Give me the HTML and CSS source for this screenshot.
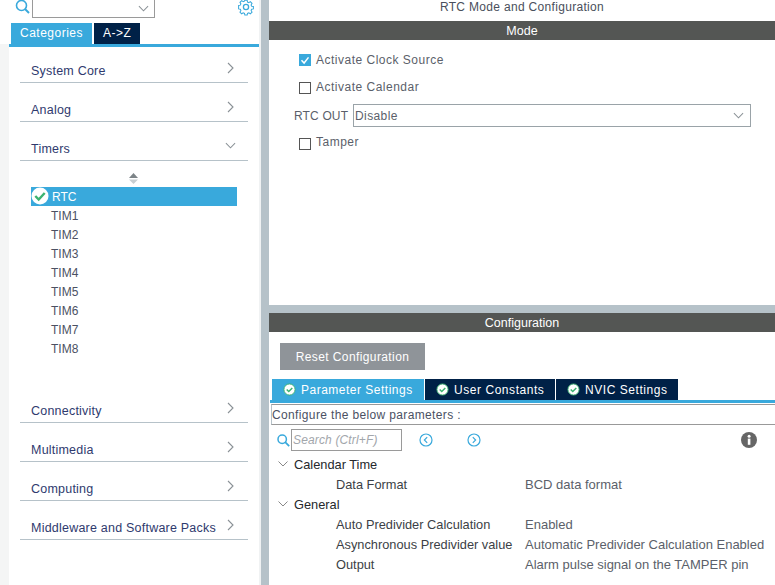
FILE: index.html
```html
<!DOCTYPE html>
<html lang="en">
<head>
<meta charset="utf-8">
<title>RTC Mode and Configuration</title>
<link rel="stylesheet" href="styles.css">
</head>
<body>
<div class="app">
  <aside class="side">
    <div class="search-top">
      <svg class="ic-search" viewBox="0 0 16 16"><circle cx="6.5" cy="5.5" r="5" fill="none" stroke="#39a9dc" stroke-width="1.6"/><path d="M10 9l4 4" stroke="#39a9dc" stroke-width="2" fill="none"/></svg>
      <div class="combo"><svg class="chev-down" viewBox="0 0 12 7"><path d="M1 1l5 5 5-5" fill="none" stroke="#8a9196" stroke-width="1.1"/></svg></div>
      <svg class="ic-gear" viewBox="0 0 18 18"><circle cx="9" cy="8" r="2.6" fill="none" stroke="#39a9dc" stroke-width="1.3"/><path d="M7.6 0.5h2.8l.4 2 1.5.7 1.8-1.1 2 2-1.1 1.8.7 1.5 2 .4v2.8l-2 .4-.7 1.5 1.1 1.8-2 2-1.8-1.1-1.5.7-.4 2H7.6l-.4-2-1.5-.7-1.8 1.1-2-2 1.1-1.8-.7-1.5-2-.4V6.6l2-.4.7-1.500-1.1-1.8 2-2 1.8 1.1 1.5-.7z" fill="none" stroke="#39a9dc" stroke-width="1.2" transform="translate(1.35 .9) scale(.85)"/></svg>
    </div>
    <div class="side-tabs">
      <div class="side-tab on">Categories</div>
      <div class="side-tab">A-&gt;Z</div>
    </div>
    <div class="side-body">
      <div class="cat"><span>System Core</span><svg class="chev-r" viewBox="0 0 7 12"><path d="M1 1l5 5-5 5" fill="none" stroke="#8a9196" stroke-width="1.1"/></svg></div>
      <div class="cat"><span>Analog</span><svg class="chev-r" viewBox="0 0 7 12"><path d="M1 1l5 5-5 5" fill="none" stroke="#8a9196" stroke-width="1.1"/></svg></div>
      <div class="cat"><span>Timers</span><svg class="chev-d" viewBox="0 0 12 7"><path d="M1 1l5 5 5-5" fill="none" stroke="#8a9196" stroke-width="1.1"/></svg></div>
      <div class="sorter"><svg viewBox="0 0 9 11" width="9" height="11"><path d="M4.5 0L9 5H0z" fill="#7d8488"/><path d="M0 6.5h9L4.5 11z" fill="#c9cfd2"/></svg></div>
      <ul class="tim-list">
        <li class="sel"><svg class="ok-big" viewBox="0 0 18 18"><circle cx="9" cy="9" r="8.5" fill="#fff"/><path d="M4.3 9l3.4 3.6 6-6.6" fill="none" stroke="#3cb371" stroke-width="2.4"/></svg>RTC</li>
        <li>TIM1</li><li>TIM2</li><li>TIM3</li><li>TIM4</li><li>TIM5</li><li>TIM6</li><li>TIM7</li><li>TIM8</li>
      </ul>
      <div class="cat"><span>Connectivity</span><svg class="chev-r" viewBox="0 0 7 12"><path d="M1 1l5 5-5 5" fill="none" stroke="#8a9196" stroke-width="1.1"/></svg></div>
      <div class="cat"><span>Multimedia</span><svg class="chev-r" viewBox="0 0 7 12"><path d="M1 1l5 5-5 5" fill="none" stroke="#8a9196" stroke-width="1.1"/></svg></div>
      <div class="cat"><span>Computing</span><svg class="chev-r" viewBox="0 0 7 12"><path d="M1 1l5 5-5 5" fill="none" stroke="#8a9196" stroke-width="1.1"/></svg></div>
      <div class="cat"><span>Middleware and Software Packs</span><svg class="chev-r" viewBox="0 0 7 12"><path d="M1 1l5 5-5 5" fill="none" stroke="#8a9196" stroke-width="1.1"/></svg></div>
    </div>
  </aside>
  <main class="main">
    <section class="mode">
      <h1 class="title">RTC Mode and Configuration</h1>
      <div class="bar">Mode</div>
      <div class="mode-form">
        <label class="chk chk-first"><span class="box checked"><svg viewBox="0 0 12 12"><path d="M2.5 6.2l2.6 2.8 4.400-5.6" fill="none" stroke="#fff" stroke-width="1.5"/></svg></span><span class="chk-text">Activate Clock Source</span></label>
        <label class="chk chk-second"><span class="box"></span><span class="chk-text">Activate Calendar</span></label>
        <div class="rtc-out"><span class="rtc-label">RTC OUT</span><div class="select">Disable<svg class="chev-down2" viewBox="0 0 12 7"><path d="M1 1l5 5 5-5" fill="none" stroke="#8a9196" stroke-width="1.1"/></svg></div></div>
        <label class="chk chk-last"><span class="box"></span><span class="chk-text">Tamper</span></label>
      </div>
    </section>
    <section class="config">
      <div class="bar">Configuration</div>
      <button class="reset">Reset Configuration</button>
      <div class="cfg-tabs">
        <div class="cfg-tab on t1"><svg class="ok" viewBox="0 0 14 14"><circle cx="7" cy="7" r="6" fill="#fff" stroke="#3cb371" stroke-width="1"/><path d="M4 7l2.2 2.2L10 5.4" fill="none" stroke="#3cb371" stroke-width="1.6"/></svg>Parameter Settings</div>
        <div class="cfg-tab t2"><svg class="ok" viewBox="0 0 14 14"><circle cx="7" cy="7" r="6" fill="#fff" stroke="#3cb371" stroke-width="1"/><path d="M4 7l2.2 2.2L10 5.4" fill="none" stroke="#3cb371" stroke-width="1.6"/></svg>User Constants</div>
        <div class="cfg-tab t3"><svg class="ok" viewBox="0 0 14 14"><circle cx="7" cy="7" r="6" fill="#fff" stroke="#3cb371" stroke-width="1"/><path d="M4 7l2.2 2.2L10 5.4" fill="none" stroke="#3cb371" stroke-width="1.6"/></svg>NVIC Settings</div>
      </div>
      <div class="cfg-line"></div>
      <div class="cfg-note">Configure the below parameters :</div>
      <div class="tools">
        <svg class="ic-search2" viewBox="0 0 13 13"><circle cx="5.2" cy="5.2" r="4.2" fill="none" stroke="#39a9dc" stroke-width="1.5"/><path d="M8.2 8.2l4 4" stroke="#39a9dc" stroke-width="1.8"/></svg>
        <div class="search-box">Search (Ctrl+F)</div>
        <svg class="nav first" viewBox="0 0 14 14"><circle cx="7" cy="7" r="6" fill="none" stroke="#39a9dc" stroke-width="1.2"/><path d="M8.2 4.2L5.4 7l2.8 2.8" fill="none" stroke="#39a9dc" stroke-width="1.2"/></svg>
        <svg class="nav second" viewBox="0 0 14 14"><circle cx="7" cy="7" r="6" fill="none" stroke="#39a9dc" stroke-width="1.2"/><path d="M5.8 4.2L8.6 7l-2.8 2.8" fill="none" stroke="#39a9dc" stroke-width="1.2"/></svg>
        <svg class="info" viewBox="0 0 16 16"><circle cx="8" cy="8" r="8" fill="#666"/><rect x="6.8" y="6.6" width="2.6" height="6.2" fill="#fff"/><circle cx="8.1" cy="4.2" r="1.5" fill="#fff"/></svg>
      </div>
      <div class="tree">
        <div class="tr group"><svg class="tw" viewBox="0 0 10 6"><path d="M.5.5L5 5 9.500.5" fill="none" stroke="#888" stroke-width="1"/></svg>Calendar Time</div>
        <div class="tr"><span class="k">Data Format</span><span class="v">BCD data format</span></div>
        <div class="tr group"><svg class="tw" viewBox="0 0 10 6"><path d="M.5.5L5 5 9.500.5" fill="none" stroke="#888" stroke-width="1"/></svg>General</div>
        <div class="tr"><span class="k">Auto Predivider Calculation</span><span class="v">Enabled</span></div>
        <div class="tr"><span class="k">Asynchronous Predivider value</span><span class="v">Automatic Predivider Calculation Enabled</span></div>
        <div class="tr"><span class="k">Output</span><span class="v">Alarm pulse signal on the TAMPER pin</span></div>
      </div>
    </section>
  </main>
</div>
</body>
</html>
```
FILE: styles.css
```css
* { box-sizing: border-box; }
html, body { margin: 0; padding: 0; height: 100%; overflow: hidden; background: #fff; }
body { font-family: "Liberation Sans", Arial, sans-serif; font-size: 12px; color: #3a3f5c; }
.app { display: flex; width: 775px; height: 585px; background: #b6c2c9; }

.side { width: 261px; flex: none; display: flex; flex-direction: column; background: #f4f5f5; border-right: 2px solid #f0f2f3; }
.search-top { flex: none; display: flex; align-items: flex-start; background: #fff; padding-left: 15px; margin-top: -5px; height: 28px; }
.ic-search { width: 16px; height: 16px; margin-top: 5px; flex: none; }
.combo { width: 123px; height: 23px; margin-left: 1px; border: 1px solid #9a9a9a; display: flex; justify-content: flex-end; padding: 8px 5px 0 0; }
.chev-down { width: 11px; height: 7px; margin-top: 1px; }
.ic-gear { width: 18px; height: 18px; margin: 4px 0 0 82px; flex: none; }

.side-tabs { display: flex; gap: 2px; background: #fff; padding-left: 11px; height: 21px; flex: none; }
.side-tab { height: 21px; line-height: 21px; background: #002147; color: #fff; padding: 0 9px; letter-spacing: .5px; font-size: 12px; }
.side-tab.on { background: #39a9dc; width: 81px; }

.side-body { flex: 1; margin-left: 9px; background: #fff; border-top: 3px solid #39a9dc; padding: 0 11px; }
.cat { height: 39px; border-bottom: 1px solid #b6c2c9; display: flex; align-items: flex-end; justify-content: space-between; padding: 0 14px 3px 11px; color: #2f3a6e; font-size: 12.5px; line-height: 15px; letter-spacing: .22px; }
.cat:first-child { height: 36px; }
.chev-r { width: 7px; height: 12px; margin-bottom: 5px; }
.chev-d { width: 11px; height: 7px; margin: 0 -2px 8px 0; }
.sorter { height: 26px; display: flex; justify-content: center; align-items: flex-end; padding: 0 2px 3px 0; }
.tim-list { list-style: none; margin: 0 0 0 11px; padding: 0; height: 197px; width: 206px; }
.tim-list li { height: 19px; line-height: 20px; padding-left: 20px; color: #4b5163; font-size: 12px; }
.tim-list li.sel { background: #39a9dc; color: #fff; position: relative; padding-left: 21px; }
.ok-big { position: absolute; left: 0; top: 0; width: 18px; height: 18px; }

.main { flex: 1; min-width: 0; margin-left: 8px; display: flex; flex-direction: column; }
.mode { height: 305px; flex: none; background: #fff; }
.title { margin: 0; height: 21px; font-weight: normal; font-size: 12px; line-height: 14px; text-align: center; color: #4a4f5c; letter-spacing: .32px; }
.bar { height: 19px; line-height: 20px; background: #545654; color: #fff; text-align: center; font-size: 12.5px; }
.mode-form { padding: 14px 0 0 30px; }
.chk { display: flex; align-items: center; height: 12px; gap: 5px; color: #5b5f6a; letter-spacing: .5px; }
.chk-first .chk-text { position: relative; top: 0; }
.chk-second .chk-text { position: relative; top: -1px; }
.chk-last .chk-text { position: relative; top: -2px; }
.chk-first { margin-bottom: 16px; }
.chk-second { margin-bottom: 10px; }
.chk-last { margin-top: 11px; }
.box { width: 12px; height: 12px; flex: none; border: 1px solid #555; background: #fff; display: block; }
.box.checked { background: #39a9dc; border-color: #39a9dc; }
.box.checked svg { display: block; width: 12px; height: 12px; margin: -1px; }
.rtc-out { display: flex; align-items: center; margin-left: -5px; height: 23px; }
.rtc-label { width: 59px; color: #5b5f6a; letter-spacing: .15px; }
.select { width: 398px; height: 23px; border: 1px solid #9aa3a8; display: flex; align-items: center; justify-content: space-between; padding: 0 4px 0 1px; color: #5b5f6a; letter-spacing: .4px; }
.chev-down2 { width: 11px; height: 7px; margin-right: 2px; }

.config { margin-top: 8px; flex: 1; background: #fff; }
.reset { display: block; margin: 11px 0 0 11px; width: 145px; height: 27px; background: #8f9499; border: 0; color: #fff; font: 12px "Liberation Sans", Arial, sans-serif; letter-spacing: .4px; padding: 0; }
.cfg-tabs { display: flex; gap: 1px; margin: 9px 0 0 3px; height: 21px; }
.cfg-tab { height: 21px; background: #002147; color: #fff; display: flex; align-items: center; letter-spacing: .55px; font-size: 12px; }
.cfg-tab.on { background: #39a9dc; letter-spacing: .5px; }
.t1 { width: 152px; padding-left: 11px; }
.t2 { width: 130px; padding-left: 11px; }
.t3 { width: 122px; padding-left: 11px; }
.ok { width: 13px; height: 13px; margin-right: 5px; flex: none; }
.cfg-line { height: 3px; margin-left: 1px; background: #39a9dc; }
.cfg-note { height: 21px; margin: 1px 0 0 2px; border: 1px solid #999; border-right: 0; line-height: 20px; color: #4b5163; letter-spacing: .36px; padding-left: 0; border-left-color: #b6c2c9; }
.tools { display: flex; align-items: center; height: 22px; margin-top: 4px; padding-left: 8px; }
.ic-search2 { width: 13px; height: 13px; margin-right: 1px; flex: none; }
.search-box { width: 111px; height: 22px; border: 1px solid #9a9a9a; color: #a2a6ab; font-style: italic; line-height: 20px; padding-left: 1px; letter-spacing: .15px; }
.nav { width: 14px; height: 14px; flex: none; }
.nav.first { margin-left: 17px; }
.nav.second { margin-left: 34px; }
.info { width: 16px; height: 16px; margin-left: 260px; flex: none; }
.tree { margin-top: 3px; }
.tr { height: 20px; display: flex; align-items: center; color: #3c3f46; padding-left: 67px; font-size: 12.8px; }
.tr.group { padding-left: 9px; color: #25282c; }
.tw { width: 10px; height: 6px; margin-right: 6px; flex: none; }
.k { width: 189px; flex: none; }
.v { color: #5b5f6a; white-space: nowrap; font-size: 13px; }
```
